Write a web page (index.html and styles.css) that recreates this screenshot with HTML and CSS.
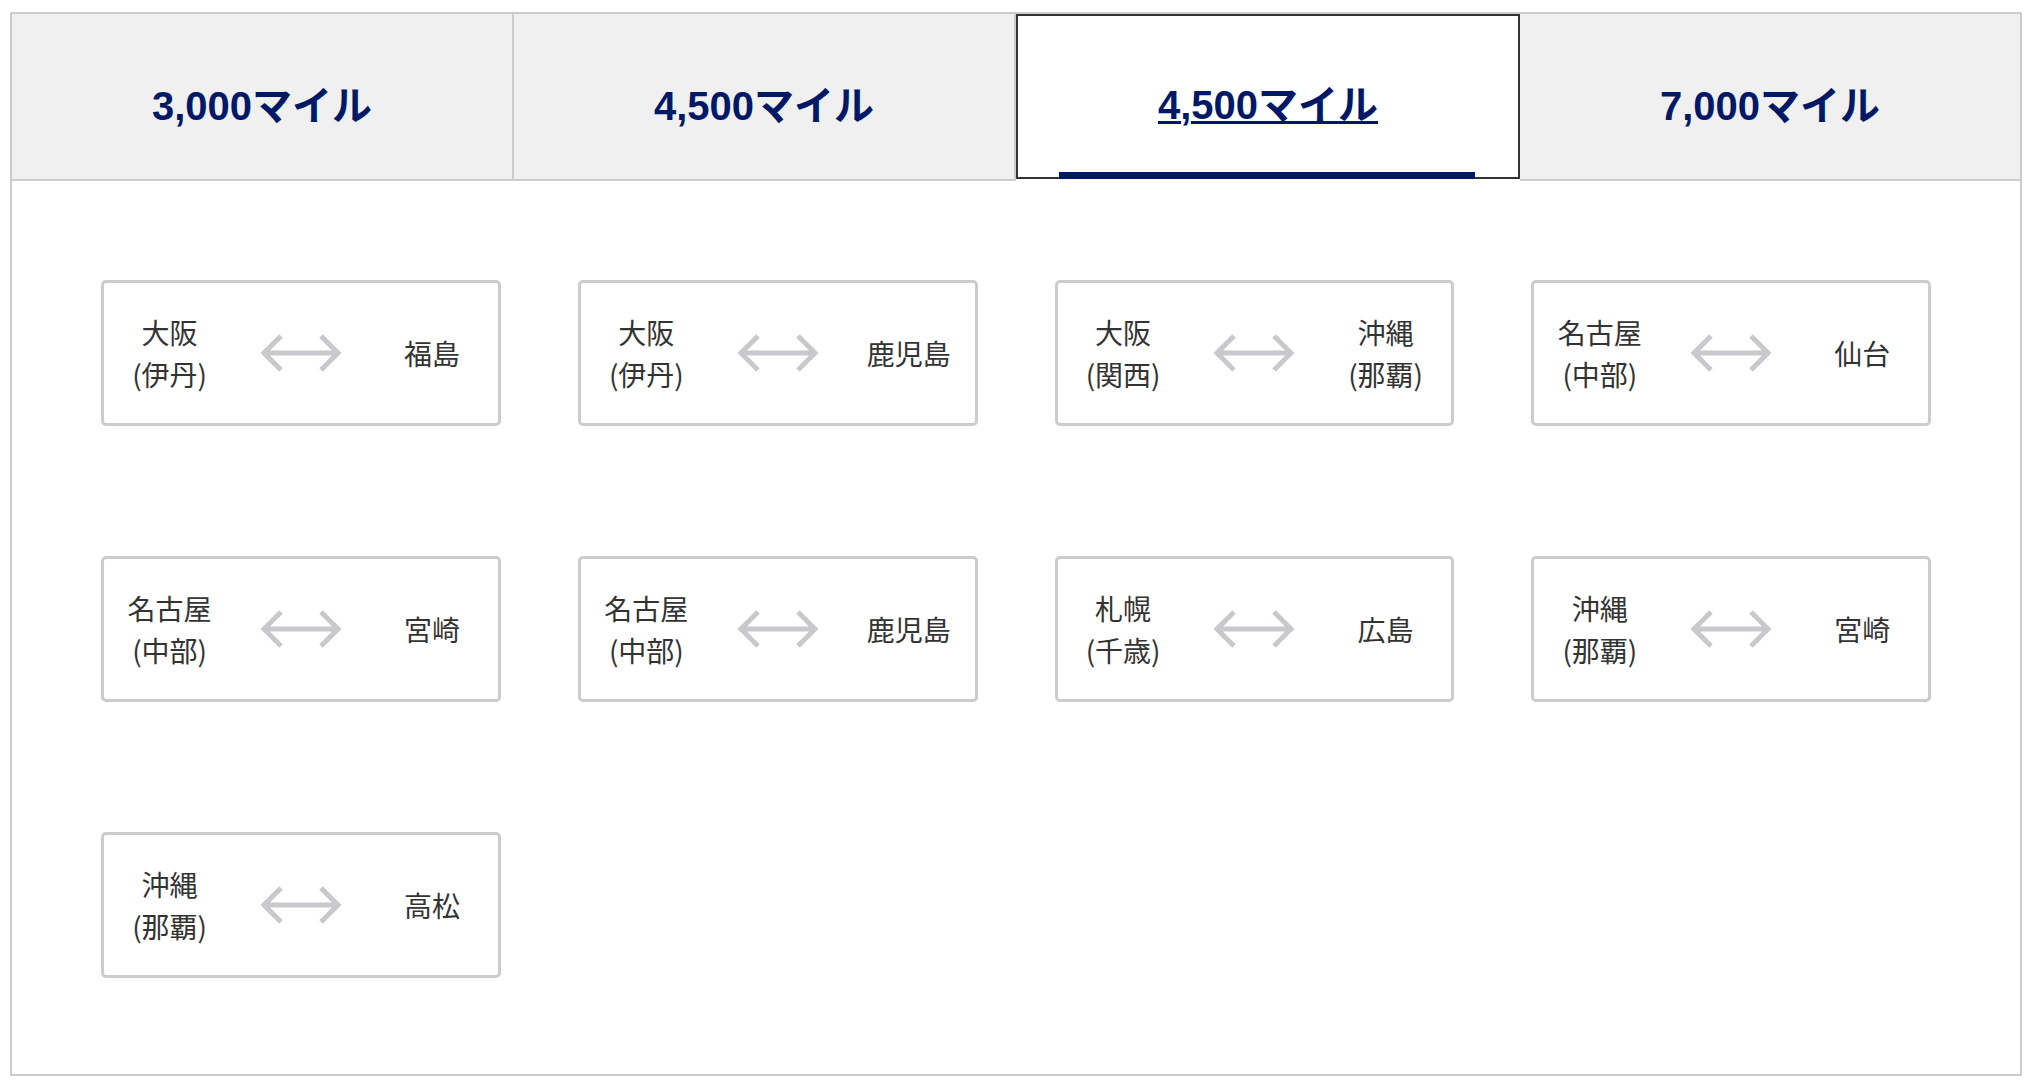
FILE: index.html
```html
<!DOCTYPE html>
<html lang="ja">
<head>
<meta charset="utf-8">
<title>マイル</title>
<link rel="stylesheet" href="styles.css">
</head>
<body>
<div class="page">
  <div class="panel">
    <div class="tabs">
      <div class="tab"><span class="tab-label">3,000マイル</span></div>
      <div class="tab"><span class="tab-label">4,500マイル</span></div>
      <div class="tab tab-active"><span class="tab-label">4,500マイル</span><span class="tab-bar"></span></div>
      <div class="tab tab-last"><span class="tab-label">7,000マイル</span></div>
    </div>
    <div class="routes">
      <div class="card"><div class="place">大阪<br>(伊丹)</div><div class="arrow"><svg viewBox="0 0 84 40" width="84" height="40"><path d="M22 3 L5 20 L22 37 M62 3 L79 20 L62 37 M5 20 H79" /></svg></div><div class="place">福島</div></div>
      <div class="card"><div class="place">大阪<br>(伊丹)</div><div class="arrow"><svg viewBox="0 0 84 40" width="84" height="40"><path d="M22 3 L5 20 L22 37 M62 3 L79 20 L62 37 M5 20 H79" /></svg></div><div class="place">鹿児島</div></div>
      <div class="card"><div class="place">大阪<br>(関西)</div><div class="arrow"><svg viewBox="0 0 84 40" width="84" height="40"><path d="M22 3 L5 20 L22 37 M62 3 L79 20 L62 37 M5 20 H79" /></svg></div><div class="place">沖縄<br>(那覇)</div></div>
      <div class="card"><div class="place">名古屋<br>(中部)</div><div class="arrow"><svg viewBox="0 0 84 40" width="84" height="40"><path d="M22 3 L5 20 L22 37 M62 3 L79 20 L62 37 M5 20 H79" /></svg></div><div class="place">仙台</div></div>
      <div class="card"><div class="place">名古屋<br>(中部)</div><div class="arrow"><svg viewBox="0 0 84 40" width="84" height="40"><path d="M22 3 L5 20 L22 37 M62 3 L79 20 L62 37 M5 20 H79" /></svg></div><div class="place">宮崎</div></div>
      <div class="card"><div class="place">名古屋<br>(中部)</div><div class="arrow"><svg viewBox="0 0 84 40" width="84" height="40"><path d="M22 3 L5 20 L22 37 M62 3 L79 20 L62 37 M5 20 H79" /></svg></div><div class="place">鹿児島</div></div>
      <div class="card"><div class="place">札幌<br>(千歳)</div><div class="arrow"><svg viewBox="0 0 84 40" width="84" height="40"><path d="M22 3 L5 20 L22 37 M62 3 L79 20 L62 37 M5 20 H79" /></svg></div><div class="place">広島</div></div>
      <div class="card"><div class="place">沖縄<br>(那覇)</div><div class="arrow"><svg viewBox="0 0 84 40" width="84" height="40"><path d="M22 3 L5 20 L22 37 M62 3 L79 20 L62 37 M5 20 H79" /></svg></div><div class="place">宮崎</div></div>
      <div class="card"><div class="place">沖縄<br>(那覇)</div><div class="arrow"><svg viewBox="0 0 84 40" width="84" height="40"><path d="M22 3 L5 20 L22 37 M62 3 L79 20 L62 37 M5 20 H79" /></svg></div><div class="place">高松</div></div>
    </div>
  </div>
</div>
</body>
</html>
```

FILE: styles.css
```css
html, body {
  margin: 0;
  padding: 0;
  background: #ffffff;
}

.page {
  padding: 12px 10px;
}

.panel {
  border: 2px solid #cccccc;
  background: #ffffff;
}

.tabs {
  display: flex;
  align-items: flex-start;
}

.tab {
  flex: 1 1 0;
  box-sizing: border-box;
  height: 167px;
  background: #f0f0f0;
  border-right: 2px solid #cccccc;
  border-bottom: 2px solid #cccccc;
  display: flex;
  align-items: center;
  justify-content: center;
  padding-top: 19px;
  position: relative;
}

.tab-last {
  border-right: none;
}

.tab-active {
  height: 165px;
  background: #ffffff;
  border: 2px solid #333333;
  padding-top: 17px;
}

.tab-label {
  font-family: "Liberation Sans", "Noto Sans CJK JP", sans-serif;
  font-weight: bold;
  font-size: 40px;
  line-height: 1;
  color: #001966;
}

.tab-active .tab-label {
  text-decoration: underline;
  text-decoration-thickness: 3px;
  text-underline-offset: 2px;
}

.tab-bar {
  position: absolute;
  left: 41px;
  right: 43px;
  bottom: -2px;
  height: 7px;
  background: #001966;
}

.routes {
  display: grid;
  grid-template-columns: repeat(4, 1fr);
  column-gap: 77px;
  row-gap: 130px;
  padding: 99px 89px 96px;
}

.card {
  box-sizing: border-box;
  height: 146px;
  border: 3px solid #cccccc;
  border-radius: 5px;
  display: grid;
  grid-template-columns: 1fr 1fr 1fr;
  align-items: center;
}

.place {
  text-align: center;
  font-family: "Noto Sans CJK JP", sans-serif;
  font-size: 28px;
  line-height: 42px;
  color: #333333;
}

.arrow {
  display: flex;
  justify-content: center;
  align-items: center;
}

.arrow svg {
  display: block;
  fill: none;
  stroke: #c8c9cc;
  stroke-width: 5;
}
```
